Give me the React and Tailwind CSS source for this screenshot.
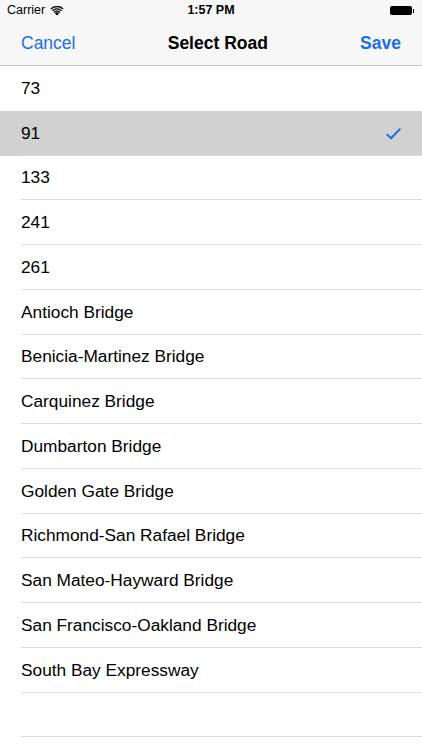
import React from "react";

const roads = [
  "73",
  "91",
  "133",
  "241",
  "261",
  "Antioch Bridge",
  "Benicia-Martinez Bridge",
  "Carquinez Bridge",
  "Dumbarton Bridge",
  "Golden Gate Bridge",
  "Richmond-San Rafael Bridge",
  "San Mateo-Hayward Bridge",
  "San Francisco-Oakland Bridge",
  "South Bay Expressway",
  "",
];

function Wifi() {
  return (
    <svg width="14" height="10" viewBox="0 0 14 10" className="ml-[5px]">
      <path d="M7 9.6 L4.9 7.3 A3 3 0 0 1 9.1 7.3 Z" fill="#000" />
      <path d="M3.6 5.9 A4.9 4.9 0 0 1 10.4 5.9 L9.5 6.9 A3.6 3.6 0 0 0 4.5 6.9 Z" fill="#000" />
      <path d="M2 4.2 A7.2 7.2 0 0 1 12 4.2 L11.1 5.2 A5.9 5.9 0 0 0 2.9 5.2 Z" fill="#000" />
      <path d="M0.4 2.5 A9.6 9.6 0 0 1 13.6 2.5 L12.7 3.5 A8.3 8.3 0 0 0 1.3 3.5 Z" fill="#000" />
    </svg>
  );
}

export default function App() {
  return (
    <div
      className="w-[422px] h-[750px] bg-white overflow-hidden"
      style={{ fontFamily: '"Liberation Sans", Arial, sans-serif' }}
    >
      <div className="bg-[#f7f7f7] border-b border-[#c6c6c6]">
        <div className="h-[21px] flex items-center justify-between px-[7px] relative">
          <div className="flex items-center text-[12.5px] text-black">
            Carrier
            <Wifi />
          </div>
          <div className="absolute left-0 right-0 text-center text-[12.5px] font-bold text-black">
            1:57 PM
          </div>
          <div className="flex items-center mr-[1px]">
            <div className="w-[22px] h-[9px] bg-black rounded-[2px]" />
            <div className="w-[1.5px] h-[4px] bg-black ml-[1px]" />
          </div>
        </div>
        <div className="h-[44px] flex items-center justify-between pl-[21px] pr-[21px]">
          <span className="text-[17.5px] text-[#1b6ee6]">Cancel</span>
          <span className="text-[17.5px] font-bold text-black">Select Road</span>
          <span className="text-[17.5px] text-[#1b6ee6] font-semibold">Save</span>
        </div>
      </div>
      <div>
        {roads.map((r, i) => (
          <div
            key={i}
            className={`h-[44.75px] pl-[21px] ${i === 1 ? "bg-[#d1d1d1]" : ""}`}
          >
            <div
              className={`h-full flex items-center justify-between pr-[21px] pt-[2px] ${
                i === 0 ? "" : "border-b border-[#dcdcdc]"
              }`}
            >
              <span className="text-[17.3px] text-black">{r}</span>
              {i === 1 && (
                <svg width="15" height="12" viewBox="0 0 15 12">
                  <path
                    d="M1.2 6.6 L5 10.3 L13.8 1.3"
                    fill="none"
                    stroke="#1b6ee6"
                    strokeWidth="2"
                    strokeLinecap="round"
                    strokeLinejoin="round"
                  />
                </svg>
              )}
            </div>
          </div>
        ))}
      </div>
    </div>
  );
}
